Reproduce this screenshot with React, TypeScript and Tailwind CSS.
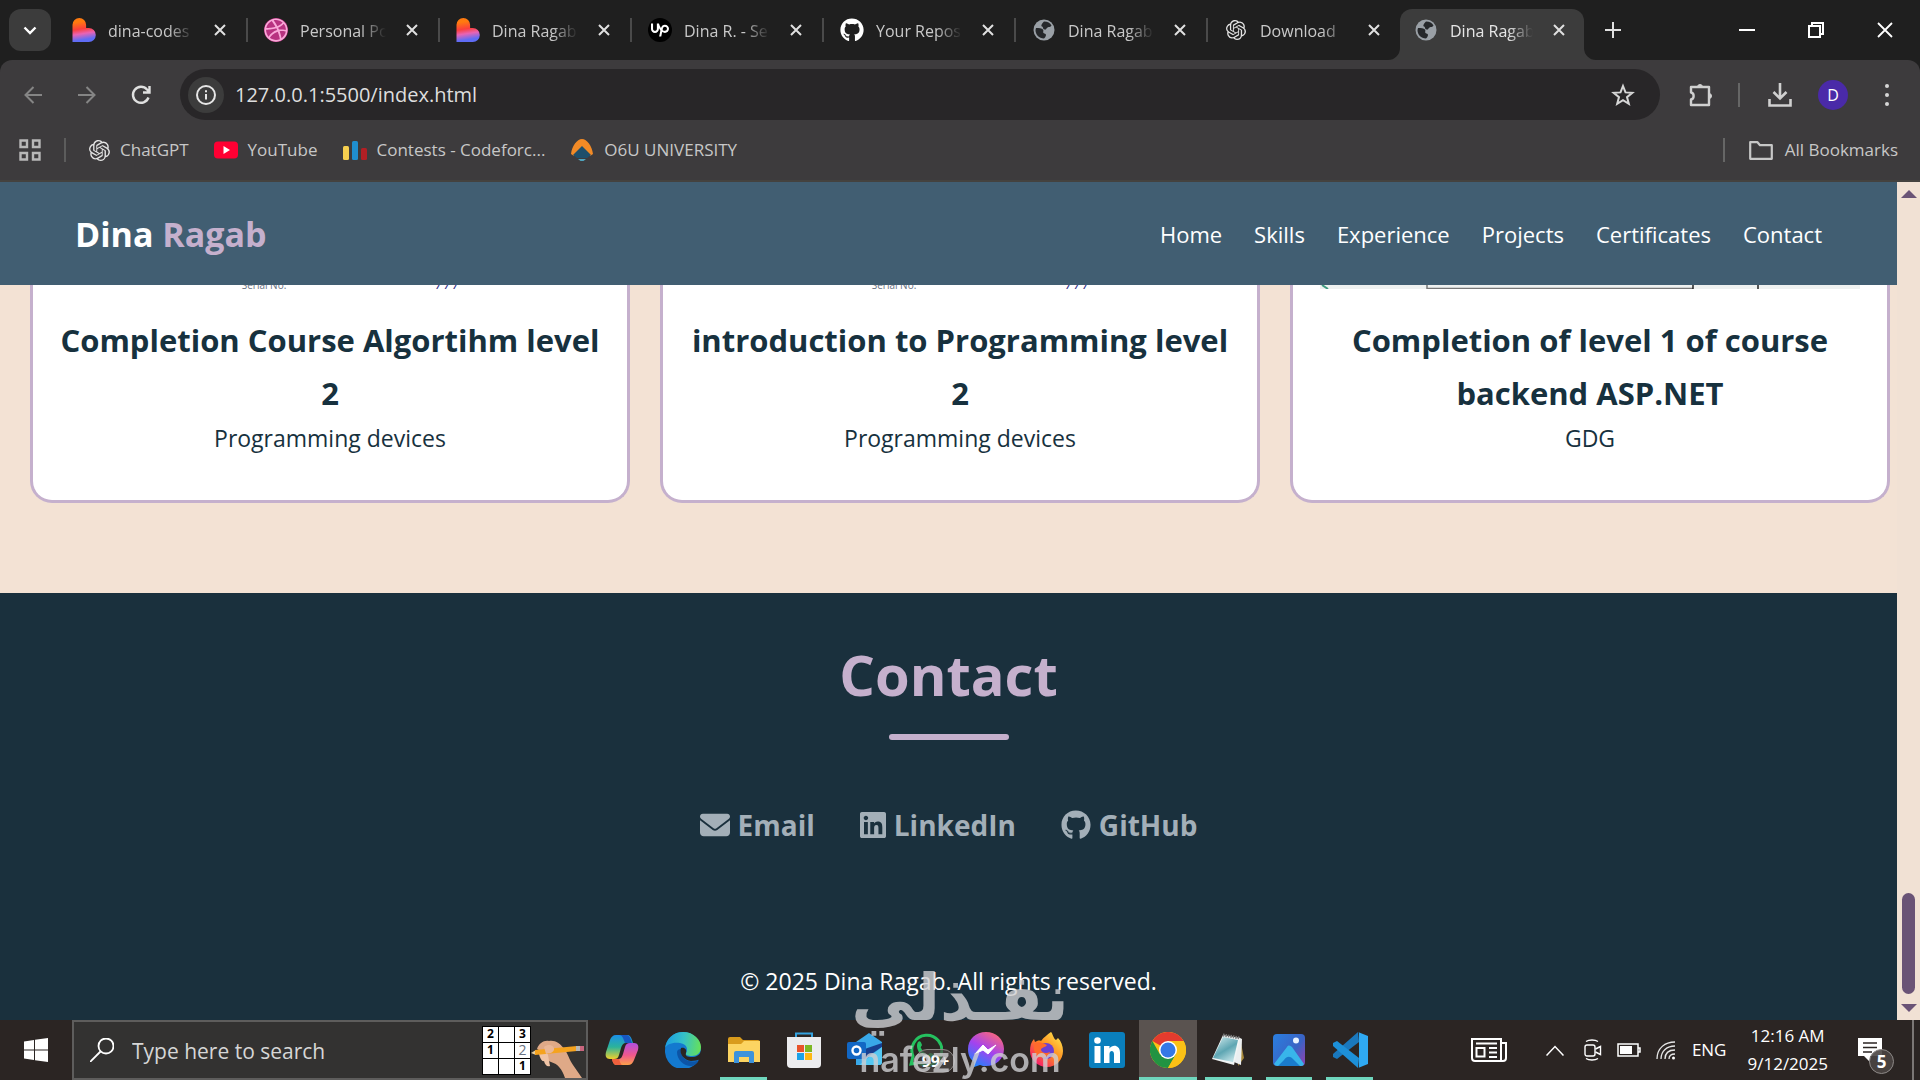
import type { ReactNode } from 'react';
import { FaDribbble, FaEnvelope, FaGithub, FaLinkedin } from 'react-icons/fa6';
import { SiOpenai, SiUpwork } from 'react-icons/si';

function LovableIcon() {
  return (
    <svg viewBox="0 0 24 24" className="size-6">
      <defs>
        <linearGradient id="lovable" x1="0.35" y1="0" x2="0.5" y2="1">
          <stop offset="0.15" stopColor="#ff7a0f" />
          <stop offset="0.45" stopColor="#fb3f3c" />
          <stop offset="0.65" stopColor="#e964b4" />
          <stop offset="0.9" stopColor="#5f6cf5" />
        </linearGradient>
      </defs>
      <path d="M0.5 6.8a6.8 6.8 0 0 1 13.6 0V10h2.7a6.9 6.9 0 0 1 0 14H0.5z" fill="url(#lovable)" />
    </svg>
  );
}

function GlobeIcon() {
  return (
    <svg viewBox="0 0 24 24" className="size-6">
      <circle cx="12" cy="12" r="10.5" fill="#9aa0a6" />
      <path d="M4 10c3 0 6 0 7 1.500 1 1.500-.5 2.500.5 3.500s2.500.5 2.500 2-1.500 3-2 3.500c-5 0-8.500-4-8.500-8.500zM12 3.500c4 0 6 1.500 7.500 4-1 2-2.500 1-4 2s-1 2.500-3 2-1-2.500-2.500-3 0-3 2-5z" fill="#26282b" />
    </svg>
  );
}

function YoutubeIcon() {
  return (
    <svg viewBox="0 0 24 18" className="h-[18px] w-6">
      <rect width="24" height="17" y="0.5" rx="4" fill="#ff0033" />
      <path d="M9.500 5v8l6.500-4z" fill="#fff" />
    </svg>
  );
}

function CodeforcesIcon() {
  return (
    <svg viewBox="0 0 24 20" className="h-5 w-6">
      <rect x="0" y="6" width="6" height="14" rx="1.500" fill="#f6cf4f" />
      <rect x="9" y="1" width="6" height="19" rx="1.500" fill="#1f8fd0" />
      <rect x="18" y="8" width="6" height="12" rx="1.500" fill="#b21f24" />
    </svg>
  );
}

function UniversityIcon() {
  return (
    <svg viewBox="0 0 24 24" className="size-6">
      <path d="M1 16C2 8 7 1 12 1s10 7 11 15l-3 2-8-9-8 9z" fill="#f28a26" />
      <path d="M3 17l9-9 9 9-4 3H7z" fill="#1e4f6b" />
      <path d="M8 21h8l-2.500 2h-3z" fill="#4fa5bf" />
    </svg>
  );
}

type Tab = { title: string; icon: ReactNode; active?: boolean };

const tabs: Tab[] = [
  { title: 'dina-codes', icon: <LovableIcon /> },
  {
    title: 'Personal Po',
    icon: <FaDribbble className="size-6 rounded-full bg-[#b83280] text-[#f9a8d8]" />,
  },
  { title: 'Dina Ragab', icon: <LovableIcon /> },
  {
    title: 'Dina R. - Se',
    icon: (
      <span className="flex size-6 items-center justify-center rounded-full bg-black text-white">
        <SiUpwork className="size-[18px]" />
      </span>
    ),
  },
  { title: 'Your Repos', icon: <FaGithub className="size-6 text-white" /> },
  { title: 'Dina Ragab', icon: <GlobeIcon /> },
  { title: 'Download', icon: <SiOpenai className="size-5 text-[#e3e3e3]" /> },
  { title: 'Dina Ragab', icon: <GlobeIcon />, active: true },
];

const bookmarks = [
  { title: 'ChatGPT', icon: <SiOpenai className="size-[21px] text-[#e3e3e3]" /> },
  { title: 'YouTube', icon: <YoutubeIcon /> },
  { title: 'Contests - Codeforc...', icon: <CodeforcesIcon /> },
  { title: 'O6U UNIVERSITY', icon: <UniversityIcon /> },
];

function CloseIcon() {
  return (
    <svg viewBox="0 0 12 12" className="size-3" stroke="currentColor" strokeWidth="2" fill="none">
      <path d="M1 1l10 10M11 1L1 11" />
    </svg>
  );
}

function TabStrip() {
  return (
    <div className="flex h-[60px] items-stretch text-[#c9c9c9]">
      <button aria-label="Search tabs" className="mt-[9px] ml-[9px] flex h-[42px] w-[42px] items-center justify-center rounded-xl bg-[#3c3c3c] text-white">
        <svg viewBox="0 0 14 9" className="h-[9px] w-[14px]" fill="none" stroke="currentColor" strokeWidth="2.400">
          <path d="M1.500 1.500L7 7l5.500-5.500" />
        </svg>
      </button>
      <div className="ml-[5px] flex min-w-0 flex-1 items-stretch">
        {tabs.map((tab, i) => (
          <div key={i} className="flex max-w-[192px] min-w-0 flex-1 items-stretch">
            <div className={tab.active ? 'relative mt-[9px] mr-2 flex min-w-0 flex-1 items-center rounded-t-xl bg-[#3c3c3c] pr-[19px] pb-[10px] pl-[14px] text-[#e6e6e6]' : 'mt-[9px] flex min-w-0 flex-1 items-center pr-5 pb-[10px] pl-4'}>
              {tab.active && (
                <>
                  <svg viewBox="0 0 12 12" className="absolute bottom-0 -left-3 size-3" fill="#3c3c3c">
                    <path d="M12 0v12H0A12 12 0 0 0 12 0z" />
                  </svg>
                  <svg viewBox="0 0 12 12" className="absolute -right-3 bottom-0 size-3" fill="#3c3c3c">
                    <path d="M0 0v12h12A12 12 0 0 1 0 0z" />
                  </svg>
                </>
              )}
              <span className="flex w-6 shrink-0 justify-center">{tab.icon}</span>
              <span className="ml-3 min-w-0 flex-1 overflow-hidden pt-0.5 text-[16px] whitespace-nowrap [mask-image:linear-gradient(to_right,black_70%,transparent)]">
                {tab.title}
              </span>
              <button aria-label="Close tab" className="ml-5 text-[#e0e0e0]">
                <CloseIcon />
              </button>
            </div>
            {i < 6 && <span className="mt-[18px] h-6 w-0.5 bg-[#4a4a4a]" />}
          </div>
        ))}
        <button aria-label="New tab" className="mb-[1px] ml-[13px]">
          <svg viewBox="0 0 16 16" className="size-4" stroke="#e0e0e0" strokeWidth="2">
            <path d="M8 0v16M0 8h16" />
          </svg>
        </button>
      </div>
      <div className="mr-[27px] flex items-center gap-[53px]">
        <button aria-label="Minimize">
          <svg viewBox="0 0 16 16" className="size-4" stroke="#fff" strokeWidth="2">
            <path d="M0 8h16" />
          </svg>
        </button>
        <button aria-label="Restore">
          <svg viewBox="0 0 16 16" className="size-4" stroke="#fff" strokeWidth="2" fill="none">
            <path d="M1 4h11v11H1zM4 4V1h11v11h-3" />
          </svg>
        </button>
        <button aria-label="Close window">
          <svg viewBox="0 0 16 16" className="size-4" stroke="#fff" strokeWidth="1.800">
            <path d="M1 1l14 14M15 1L1 15" />
          </svg>
        </button>
      </div>
    </div>
  );
}

function Toolbar() {
  return (
    <div className="flex h-[69px] items-center pl-6">
      <button aria-label="Back">
        <svg viewBox="0 0 18 18" className="size-[18px]" fill="none" stroke="#858585" strokeWidth="2">
          <path d="M18 9H2M9.500 1L1.500 9l8 8" />
        </svg>
      </button>
      <button aria-label="Forward" className="ml-9">
        <svg viewBox="0 0 18 18" className="size-[18px]" fill="none" stroke="#858585" strokeWidth="2">
          <path d="M0 9h16M8.500 1l8 8-8 8" />
        </svg>
      </button>
      <button aria-label="Reload" className="ml-[35px]">
        <svg viewBox="0 0 20 20" className="size-5" fill="none" stroke="#e0e0e0" strokeWidth="2.400">
          <path d="M17.500 12.500A8 8 0 1 1 16 4.500l2 2M18.500 1v6.500H12" />
        </svg>
      </button>
      <div className="ml-[29px] flex h-[51px] min-w-0 flex-1 items-center rounded-full bg-[#282628] pr-[25px] pl-2">
        <button aria-label="Site information" className="flex size-9 items-center justify-center rounded-full bg-[#3c3c3c]">
          <svg viewBox="0 0 20 20" className="size-5" fill="none" stroke="#e6e6e6" strokeWidth="2">
            <circle cx="10" cy="10" r="9" />
            <path d="M10 9v5.500M10 5.200v2" />
          </svg>
        </button>
        <input aria-label="Address" defaultValue="127.0.0.1:5500/index.html" className="ml-[11px] min-w-0 flex-1 bg-transparent text-[20px] text-[#dedede] outline-none" />
        <button aria-label="Bookmark this tab">
          <svg viewBox="0 0 24 24" className="size-6" fill="none" stroke="#d6d6d6" strokeWidth="2">
            <path d="M12 3l2.500 6.400 6.800.4-5.300 4.300 1.800 6.700-5.800-3.700-5.800 3.700L8 14.100 2.700 9.800l6.800-.4z" />
          </svg>
        </button>
      </div>
      <button aria-label="Extensions" className="ml-[29px]">
        <svg viewBox="0 0 24 24" className="size-6" fill="none" stroke="#d0d0d0" strokeWidth="2.400" strokeLinejoin="round">
          <path d="M2 4h18v18H2v-5.500c3.500-.5 3.500-6.500 0-7z" />
          <path d="M8.500 4a2.500 2.500 0 0 1 5 0zM20 10.500a2.500 2.500 0 0 1 0 5z" fill="#d0d0d0" strokeWidth="1" />
        </svg>
      </button>
      <span className="ml-[25px] h-6 w-0.5 bg-[#666]" />
      <button aria-label="Downloads" className="ml-7">
        <svg viewBox="0 0 24 24" className="size-6" fill="none" stroke="#d0d0d0" strokeWidth="2.600">
          <path d="M12 0v15M5.500 9l6.500 6.500L18.500 9M1.500 16v6.500h21V16" />
        </svg>
      </button>
      <button aria-label="Profile" className="ml-[26px] size-[30px] rounded-full bg-[#4a2aa8] text-[16px] text-white">
        D
      </button>
      <button aria-label="Menu" className="mr-[31px] ml-[37px]">
        <svg viewBox="0 0 4 22" className="h-[22px] w-1" fill="#d6d6d6">
          <circle cx="2" cy="2" r="2" />
          <circle cx="2" cy="11" r="2" />
          <circle cx="2" cy="20" r="2" />
        </svg>
      </button>
    </div>
  );
}

function BookmarksBar() {
  return (
    <div className="flex h-[53px] items-center border-b-2 border-[#44423f] pr-[22px] pb-[9px] pl-[19px] text-[17px] text-[#c7c7c7]">
      <button aria-label="Apps">
        <svg viewBox="0 0 22 22" className="size-[22px]" fill="none" stroke="#b8b8b8" strokeWidth="2.400">
          <path d="M1.500 1.500h6.500v6.500H1.500zM14 1.500h6.500v6.500H14zM1.500 14h6.500v6.500H1.500zM14 14h6.500v6.500H14z" />
        </svg>
      </button>
      <span className="ml-[23px] h-6 w-0.5 bg-[#5c5c5c]" />
      <nav className="ml-[23px] flex items-center gap-[25px]">
        {bookmarks.map((bookmark) => (
          <a key={bookmark.title} href="#" className="flex items-center gap-2.5">
            {bookmark.icon}
            {bookmark.title}
          </a>
        ))}
      </nav>
      <span className="ml-auto h-6 w-0.5 bg-[#666]" />
      <a href="#" className="ml-6 flex items-center gap-3">
        <svg viewBox="0 0 24 19" className="h-[19px] w-6" fill="none" stroke="#c7c7c7" strokeWidth="2.200" strokeLinejoin="round">
          <path d="M1.200 1.200h7.300l2.500 3h11.800v13.600H1.200z" />
        </svg>
        All Bookmarks
      </a>
    </div>
  );
}

const links = ['Home', 'Skills', 'Experience', 'Projects', 'Certificates', 'Contact'];

function SiteHeader() {
  return (
    <header className="flex h-[103px] items-center justify-between bg-[#415e72] px-[75px] pt-0.5">
      <a href="#" className="text-[34px] font-bold text-white">
        Dina <span className="text-[#c5b0cd]">Ragab</span>
      </a>
      <nav className="flex gap-8 text-[22px] text-white">
        {links.map((link) => (
          <a key={link} href="#">{link}</a>
        ))}
      </nav>
    </header>
  );
}

// Bottom edge of each certificate scan, the rest is scrolled under the header
function ScanEdge({ kind }: { kind: number }) {
  if (kind === 2) {
    return (
      <svg viewBox="0 0 540 4" preserveAspectRatio="none" className="mx-auto h-1 w-[540px] max-w-full">
        <rect width="540" height="4" fill="#eef1f0" />
        <path d="M2 0l6 4" stroke="#3f9a80" strokeWidth="2" />
        <path d="M107 0v4M107 3.500h266" stroke="#777" strokeWidth="1.500" />
        <path d="M373 0v4M438 0v4" stroke="#222" strokeWidth="1.500" />
      </svg>
    );
  }
  return (
    <div className="flex h-1 items-end justify-center gap-[150px] overflow-hidden pl-10 text-[10px] leading-[8px] text-gray-500">
      <span>Serial No.</span>
      <span className="text-[14px] text-indigo-900 italic">/ / /</span>
    </div>
  );
}

const certificates = [
  { title: 'Completion Course Algortihm level 2', issuer: 'Programming devices' },
  { title: 'introduction to Programming level 2', issuer: 'Programming devices' },
  { title: 'Completion of level 1 of course backend ASP.NET', issuer: 'GDG' },
];

function Certificates() {
  return (
    <section className="grid grid-cols-3 gap-[30px] bg-[#f3e2d4] pr-[7px] pb-[90px] pl-[30px] text-center text-[#17313e]">
      {certificates.map((certificate, i) => (
        <article key={i} className="rounded-b-[22px] border-x-[3px] border-b-[3px] border-[#c5b0cd] bg-white pb-[43px]">
          <ScanEdge kind={i} />
          <h3 className="mt-[25px] px-5 text-[31px] leading-[53px] font-bold">{certificate.title}</h3>
          <p className="text-[23px] leading-[37px]">{certificate.issuer}</p>
        </article>
      ))}
    </section>
  );
}

function Contact() {
  return (
    <footer className="flex flex-1 flex-col items-center bg-[#1a303d] text-white">
      <h2 className="mt-[41px] text-[56px] leading-[80px] font-bold text-[#c5b0cd]">Contact</h2>
      <span className="mt-5 h-1.5 w-[120px] rounded-full bg-[#c5b0cd]" />
      <div className="mt-[63px] flex items-center gap-[45px] text-[28px] leading-[44px] font-bold text-[#a3afb8]">
        <a href="#" className="flex items-center gap-2">
          <FaEnvelope className="size-[30px]" />
          Email
        </a>
        <a href="#" className="flex items-center gap-2">
          <FaLinkedin className="h-[30px] w-[26px]" />
          LinkedIn
        </a>
        <a href="#" className="flex items-center gap-2">
          <FaGithub className="size-[30px]" />
          GitHub
        </a>
      </div>
      <p className="mt-[116px] text-[23px] leading-[37px]">© 2025 Dina Ragab. All rights reserved.</p>
    </footer>
  );
}

function Scrollbar() {
  return (
    <div className="flex w-[23px] flex-col items-center bg-[#f1e1d4] py-2">
      <button aria-label="Scroll up">
        <svg viewBox="0 0 16 8" className="h-2 w-4" fill="#6a5376">
          <path d="M8 0l8 8H0z" />
        </svg>
      </button>
      <span className="mt-auto mb-[10px] h-[101px] w-[13px] rounded-full bg-[#6a5376]" />
      <button aria-label="Scroll down">
        <svg viewBox="0 0 16 8" className="h-2 w-4" fill="#6a5376">
          <path d="M8 8l8-8H0z" />
        </svg>
      </button>
    </div>
  );
}

function CopilotIcon() {
  return (
    <svg viewBox="0 0 36 36" className="size-9">
      <defs>
        <linearGradient id="cop-a" x1="0" y1="0" x2="0" y2="1">
          <stop offset="0" stopColor="#1b8fe8" />
          <stop offset="0.5" stopColor="#2bb39a" />
          <stop offset="1" stopColor="#f0d02c" />
        </linearGradient>
        <linearGradient id="cop-b" x1="0" y1="0" x2="0" y2="1">
          <stop offset="0" stopColor="#b14fe0" />
          <stop offset="0.55" stopColor="#f0578d" />
          <stop offset="1" stopColor="#fba14a" />
        </linearGradient>
      </defs>
      <path d="M12 3h11c3 0 4 2 5 5l1 3h-7c-3 0-4 2-5 5l-2 7c-1 3-2 4-5 4H6c-4 0-5-3-4-7L6 8c1-3 3-5 6-5z" fill="url(#cop-a)" />
      <path d="M22 3c3 0 4 2 5 5l1 3h-7l-2-5c-1-2-2-3-4-3z" fill="#1757c2" />
      <path d="M24 33H13c-3 0-4-2-5-6h6c3 0 4-2 5-5l2-7c1-3 2-4 5-4h4c4 0 5 3 4 7l-4 10c-1 3-3 5-6 5z" fill="url(#cop-b)" />
      <path d="M13 33c-3 0-4-2-5-6h7l1 3c1 2 1 3 3 3z" fill="#f0603d" />
    </svg>
  );
}

function EdgeIcon() {
  return (
    <svg viewBox="0 0 36 36" className="size-9">
      <defs>
        <linearGradient id="edge-top" x1="0" y1="0.4" x2="1" y2="0.5">
          <stop offset="0" stopColor="#1b9de2" />
          <stop offset="0.5" stopColor="#35c1c8" />
          <stop offset="1" stopColor="#66e05a" />
        </linearGradient>
      </defs>
      <path d="M0 18a18 18 0 0 1 36 0l-3 11a18 18 0 0 1-33-11z" fill="#1379cf" />
      <path d="M0 17C1 6 9 0 18 0c11 0 18 8 18 15 0 6-4 9-9 9-4 0-7-1-6-3 2-2 2-9-6-10C8 10 1 12 0 17z" fill="url(#edge-top)" />
      <path d="M12 20c0 8 7 14 14 14 3 0 6-2 8-6-8 4-19 0-18-11-2 0-4 1-4 3z" fill="#0c54a6" />
      <path d="M16 16c-2 6 3 12 10 13 4 0 7-1 9-2l1-8c-1 4-5 6-9 6-5 0-7-1-6-4 1-3-1-6-5-5z" fill="#2a2522" />
    </svg>
  );
}

function ExplorerIcon() {
  return (
    <svg viewBox="0 0 34 30" className="h-[30px] w-[34px]">
      <path d="M1 4a2 2 0 0 1 2-2h10l3 3h15a2 2 0 0 1 2 2v20H1z" fill="#d99b1c" />
      <path d="M1 9h13l3-3h16v21H1z" fill="#fcd462" />
      <path d="M7 18a2 2 0 0 1 2-2h16a2 2 0 0 1 2 2v10h-5v-6H12v6H7z" fill="#3d93dc" />
    </svg>
  );
}

function StoreIcon() {
  return (
    <svg viewBox="0 0 36 38" className="h-[38px] w-9">
      <path d="M10 8V2.500h16V8" fill="none" stroke="#35a3e0" strokeWidth="2" />
      <path d="M1 6h34v27a4 4 0 0 1-4 4H5a4 4 0 0 1-4-4z" fill="#ececee" />
      <path d="M11 14h7v7h-7z" fill="#e8532a" />
      <path d="M19 14h7v7h-7z" fill="#7db824" />
      <path d="M11 22h7v7h-7z" fill="#1ba2e8" />
      <path d="M19 22h7v7h-7z" fill="#fdb813" />
    </svg>
  );
}

function OutlookIcon() {
  return (
    <svg viewBox="0 0 36 36" className="size-9">
      <path d="M9 10L22 1l13 9v20a3 3 0 0 1-3 3H9z" fill="#39a8e8" />
      <path d="M9 20l26-9v4L17 27z" fill="#173f8f" />
      <path d="M35 15v15a3 3 0 0 1-3 3H12z" fill="#55c8f2" />
      <rect y="10" width="19" height="17" rx="2" fill="#1267c4" />
      <circle cx="9.500" cy="18.500" r="4" fill="none" stroke="#fff" strokeWidth="2.400" />
    </svg>
  );
}

function WhatsappIcon() {
  return (
    <span className="relative">
      <svg viewBox="0 0 36 36" className="size-9">
        <path d="M4 32l2-8A15 15 0 1 1 12 31z" fill="#2a2522" stroke="#25c15f" strokeWidth="3" />
        <path d="M11 10c2-2 3 0 4 3 0 1-2 2-1 3 2 4 4 5 7 7 2-3 3-2 5-1 2 2 0 4-2 5-8 1-17-10-13-17z" fill="#25c15f" />
      </svg>
      <span className="absolute top-[17px] left-2 flex h-6 w-10 items-center justify-center rounded-full border border-[#8b8785] bg-[#4b4644]/70 text-[16px] font-bold text-white">
        99+
      </span>
    </span>
  );
}

function MessengerIcon() {
  return (
    <svg viewBox="0 0 36 36" className="size-9">
      <defs>
        <linearGradient id="messenger" x1="0.2" y1="1" x2="0.8" y2="0">
          <stop offset="0" stopColor="#1a86ff" />
          <stop offset="0.5" stopColor="#a442ee" />
          <stop offset="1" stopColor="#ff6a76" />
        </linearGradient>
      </defs>
      <path d="M18 0C8 0 0 7 0 17c0 6 2 10 6 13v5l6-2c2 1 4 1 6 1 10 0 18-7 18-17S28 0 18 0z" fill="url(#messenger)" />
      <path d="M7 22l8-9 5 5 8-5-8 9-5-4z" fill="#fff" stroke="#fff" />
    </svg>
  );
}

function FirefoxIcon() {
  return (
    <svg viewBox="0 0 36 36" className="size-9">
      <defs>
        <linearGradient id="firefox" x1="0.9" y1="0.1" x2="0.2" y2="0.9">
          <stop offset="0" stopColor="#ffe14a" />
          <stop offset="0.5" stopColor="#ff8a1f" />
          <stop offset="1" stopColor="#f5206a" />
        </linearGradient>
      </defs>
      <path d="M22 0c2 2 2 6 5 8l2-2c3 3 5 8 5 13 0 9-7 16-16 16S1 28 1 19c0-5 1-9 4-12l1 3c2-1 4-2 6-1 3-4 6-6 10-9z" fill="url(#firefox)" />
      <circle cx="17" cy="19" r="8" fill="#6b3fd4" />
      <path d="M6 11c4-2 8 0 12 2-2 3-6 2-6 5 1 3 5 4 9 2-1 5-7 7-11 5-5-3-6-9-4-14z" fill="#ff6a2b" />
    </svg>
  );
}

function LinkedinAppIcon() {
  return (
    <svg viewBox="0 0 36 36" className="size-9">
      <rect width="36" height="36" rx="3" fill="#0a7fbd" />
      <circle cx="8.500" cy="8.500" r="3.300" fill="#fff" />
      <path d="M5.500 14h6v17h-6zM15 14h5.500v2.500c3-4.500 10.500-3.500 10.500 4V31h-6v-9c0-4-4.500-4-4.500 0v9H15z" fill="#fff" />
    </svg>
  );
}

function ChromeIcon() {
  return (
    <svg viewBox="0 0 36 36" className="size-9">
      <circle cx="18" cy="18" r="18" fill="#fbc116" />
      <path d="M18 18L2.400 9A18 18 0 0 1 33.600 9z" fill="#e33b2e" />
      <path d="M18 9h15.600L18 9z" fill="#e33b2e" />
      <path d="M2.400 9L10 22.500 18 27l0 9A18 18 0 0 1 2.400 9z" fill="#229342" />
      <path d="M18 36l7.800-13.500L18 18l-8 4.500z" fill="#229342" />
      <path d="M18 9h15.600A18 18 0 0 1 18 36l7.800-13.500z" fill="#fbc116" />
      <circle cx="18" cy="18" r="9" fill="#fff" />
      <circle cx="18" cy="18" r="7.500" fill="#3578e5" />
    </svg>
  );
}

function NotepadIcon() {
  return (
    <svg viewBox="0 0 36 36" className="size-9">
      <defs>
        <linearGradient id="notepad" x1="0" y1="0" x2="0.6" y2="1">
          <stop offset="0" stopColor="#d8eef0" />
          <stop offset="0.6" stopColor="#5ea6b3" />
          <stop offset="1" stopColor="#b9dde2" />
        </linearGradient>
      </defs>
      <path d="M30 6l4 20-6 8z" fill="#a98a3b" />
      <path d="M28 5l4 2-1 26-7-3z" fill="#eceff0" />
      <path d="M13 3l17 3-6 27L2 27z" fill="#f1f5f5" />
      <path d="M13 5l15 3-5 22L3 26z" fill="url(#notepad)" />
      <path d="M13 3l17 3" stroke="#777" strokeWidth="3" strokeDasharray="1.500 1" />
    </svg>
  );
}

function PhotosIcon() {
  return (
    <svg viewBox="0 0 32 32" className="size-8">
      <defs>
        <linearGradient id="photos" x1="0" y1="0" x2="1" y2="0.7">
          <stop offset="0" stopColor="#2a7fe0" />
          <stop offset="0.7" stopColor="#3a63c4" />
          <stop offset="1" stopColor="#7a4bb5" />
        </linearGradient>
      </defs>
      <rect width="32" height="32" rx="4" fill="url(#photos)" />
      <path d="M1 30l13-17c1-2 3-2 5 0l12 17c-1 2-2 2-4 2H5c-2 0-3-1-4-2z" fill="#38b5ea" />
      <path d="M11 26c3-4 6-4 9-1l7 7H5z" fill="#1a7ccc" />
      <circle cx="23" cy="6.500" r="3" fill="#e8f3ff" />
    </svg>
  );
}

function VscodeIcon() {
  return (
    <svg viewBox="0 0 36 36" className="size-9">
      <path d="M27 10L5 27 1 25v-3L26 0z" fill="#1a78bd" />
      <path d="M27 26L5 9l-4 2v3l25 22z" fill="#1d90d8" />
      <path d="M26 0l10 4v28l-10 4c1 0 1-1 1-2V2c0-1 0-2-1-2z" fill="#2fa9f2" />
    </svg>
  );
}

type App = { name: string; icon: ReactNode; running?: boolean; active?: boolean };

const apps: App[] = [
  { name: 'Copilot', icon: <CopilotIcon /> },
  { name: 'Edge', icon: <EdgeIcon /> },
  { name: 'File Explorer', icon: <ExplorerIcon />, running: true },
  { name: 'Microsoft Store', icon: <StoreIcon /> },
  { name: 'Outlook', icon: <OutlookIcon /> },
  { name: 'WhatsApp', icon: <WhatsappIcon /> },
  { name: 'Messenger', icon: <MessengerIcon /> },
  { name: 'Firefox', icon: <FirefoxIcon /> },
  { name: 'LinkedIn', icon: <LinkedinAppIcon /> },
  { name: 'Chrome', icon: <ChromeIcon />, active: true },
  { name: 'Notepad', icon: <NotepadIcon />, running: true },
  { name: 'Photos', icon: <PhotosIcon />, running: true },
  { name: 'VS Code', icon: <VscodeIcon />, running: true },
];

const sudoku = ['2', '', '3', '1', '', '2', '', '', '1'];

function SearchBox() {
  return (
    <label className="ml-6 flex h-full w-[516px] items-center overflow-hidden border-2 border-[#5e5d5c] bg-[#333231] pl-4">
      <svg viewBox="0 0 24 24" className="size-6" fill="none" stroke="#fff" strokeWidth="1.800">
        <circle cx="16" cy="8" r="7.500" />
        <path d="M10.500 13.500L0 24" />
      </svg>
      <input aria-label="Search" placeholder="Type here to search" className="ml-[18px] min-w-0 flex-1 bg-transparent pt-1 text-[21px] outline-none placeholder:text-[#d6d6d6]" />
      <span className="grid grid-cols-3 gap-px border border-black bg-black">
        {sudoku.map((n, i) => (
          <span key={i} className={i === 5 ? 'flex size-[15px] items-center justify-center bg-white text-[14px] leading-none text-gray-500' : 'flex size-[15px] items-center justify-center bg-white text-[12px] leading-none font-bold text-black'}>
            {n}
          </span>
        ))}
      </span>
      <svg viewBox="0 0 56 56" className="-ml-px h-14 w-14 shrink-0">
        <path d="M7 27c2-6 7-9 12-8 6-1 11 2 16 9 3 4 4 9 8 15l9 13H35c-3-9-7-14-14-16-3-1-5-4-5-8z" fill="#dfa987" />
        <path d="M9 32c4-4 8-3 9 1l2 11c-3 1-5-1-6-5-2 1-4-3-5-7z" fill="#f0c4a6" />
        <path d="M1 31l5-3v5z" fill="#e8cfa0" />
        <path d="M5 28l42-4v5L5 33z" fill="#f5a31f" />
        <path d="M46 24h4v5h-4z" fill="#b8b8b8" />
        <path d="M50 24h4v5h-4z" fill="#c9667e" />
        <path d="M14 25c5-4 11-1 10 3-2 4-6 3-8 4z" fill="#e9b797" />
      </svg>
    </label>
  );
}

function Tray() {
  return (
    <div className="ml-auto flex h-full items-center text-[17px] text-white">
      <button aria-label="News" className="mr-[39px]">
        <svg viewBox="0 0 36 24" className="h-6 w-9" fill="none" stroke="#fff" strokeWidth="2">
          <path d="M30 22.500V1H1v19a3 3 0 0 0 3 3h28a3 3 0 0 0 3-3V5h-5" />
          <path d="M5 5.500h21M18 10h8M18 14.500h8M18 19h8M5.500 10h8v8.500h-8z" />
        </svg>
      </button>
      <button aria-label="Show hidden icons">
        <svg viewBox="0 0 18 11" className="h-[11px] w-[18px]" fill="none" stroke="#fff" strokeWidth="1.500">
          <path d="M0.500 10.500L9 1.500l8.500 9" />
        </svg>
      </button>
      <svg viewBox="0 0 18 22" className="ml-5 h-[22px] w-[18px]" fill="none" stroke="#fff" strokeWidth="1.400">
        <rect x="1" y="6" width="10" height="11" rx="2" />
        <path d="M11.500 10l5-2.500v8l-5-2.500M2 2.500c3-2 9-2 12 0M2 19.500c3 2 9 2 12 0" />
      </svg>
      <svg viewBox="0 0 24 14" className="ml-[15px] h-[14px] w-6" fill="none" stroke="#fff" strokeWidth="1.500">
        <path d="M1 1h20v12H1zM21 5h2v4h-2" />
        <path d="M3 3h12v8H3z" fill="#fff" stroke="none" />
      </svg>
      <svg viewBox="0 0 20 20" className="ml-[15px] size-5" fill="none" stroke="#e6e6e6" strokeWidth="1.300">
        <path d="M1 19C1 8 9 2 19 2M5 19c0-8 6-13 14-13M9 19c0-6 4-9 10-9M13 19c0-3 2-5 6-5" />
        <circle cx="17.500" cy="18" r="1.500" fill="#fff" stroke="none" />
      </svg>
      <span className="ml-4">ENG</span>
      <time className="ml-[21px] text-center leading-7">
        12:16 AM
        <br />
        9/12/2025
      </time>
      <button aria-label="Notifications" className="relative ml-[30px]">
        <svg viewBox="0 0 24 24" className="size-6">
          <path d="M0 0h24v18H12v6l-6-6H0z" fill="#fff" />
          <path d="M5 5h14M5 9.500h14M5 14h9" stroke="#2b2523" strokeWidth="1.400" />
        </svg>
        <span className="absolute top-[11px] left-[11px] flex size-[25px] items-center justify-center rounded-full border border-[#8d8987] bg-[#4a4543]/90 text-[17px] font-bold">
          5
        </span>
      </button>
      <span className="mr-[6px] ml-[30px] h-full w-0.5 bg-[#7b7775]" />
    </div>
  );
}

function Taskbar() {
  return (
    <div className="flex h-[60px] items-center bg-[#2b2523]">
      <button aria-label="Start" className="ml-6">
        <svg viewBox="0 0 24 24" className="size-6" fill="#fff">
          <path d="M0 3.500L10 2v9.500H0zM11 1.800L24 0v11.500H11zM0 12.500h10V22L0 20.500zM11 12.500h13V24l-13-1.800z" />
        </svg>
      </button>
      <SearchBox />
      <div className="ml-1 grid h-full w-[788px] grid-cols-13">
        {apps.map((app) => (
          <button key={app.name} aria-label={app.name} className={app.active ? 'relative mx-px flex items-center justify-center bg-[#5a5350]' : 'relative flex items-center justify-center'}>
            {app.icon}
            {app.active && <span className="absolute inset-x-0 bottom-0 h-[3px] bg-[#6fd6bd]" />}
            {app.running && <span className="absolute inset-x-[7px] bottom-0 h-[3px] bg-[#6fd6bd]" />}
          </button>
        ))}
      </div>
      <Tray />
    </div>
  );
}

function Watermark() {
  return (
    <div className="pointer-events-none absolute bottom-0 left-1/2 flex w-[212px] -translate-x-1/2 flex-col items-center text-[#cfcfd2] opacity-80">
      <span lang="ar" dir="rtl" className="mb-3 font-['DejaVu_Sans',sans-serif] text-[64px] leading-[60px] font-bold">
        نفـذلي
      </span>
      <span className="font-['Inter',sans-serif] text-[34px] leading-[40px] font-semibold">nafezly.com</span>
    </div>
  );
}

export default function App() {
  return (
    <div className="relative flex min-h-screen flex-col overflow-hidden bg-[#1f1f1f] font-['Open_Sans',sans-serif]">
      <TabStrip />
      <div className="rounded-t-xl bg-[#3d3b3d]">
        <Toolbar />
        <BookmarksBar />
      </div>
      <div className="flex flex-1">
        <main className="flex min-w-0 flex-1 flex-col">
          <SiteHeader />
          <Certificates />
          <Contact />
        </main>
        <Scrollbar />
      </div>
      <Taskbar />
      <Watermark />
    </div>
  );
}
